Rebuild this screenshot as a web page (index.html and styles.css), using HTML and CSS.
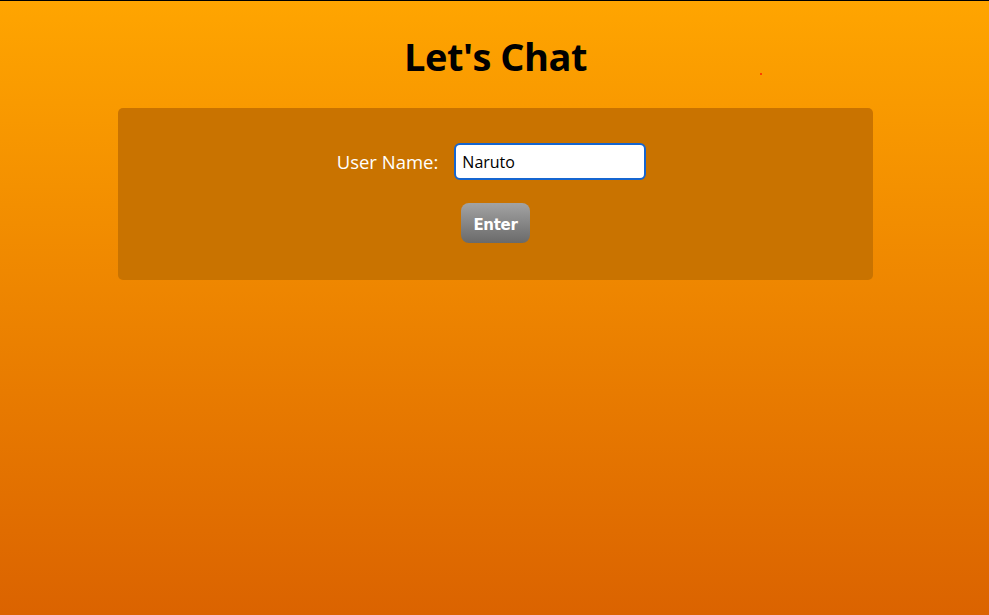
FILE: index.html
```html
<!DOCTYPE html>
<html>
<head>
<meta charset="utf-8">
<link rel="stylesheet" href="styles.css">
</head>
<body>
<div class="page">
  <h1 class="title">Let's Chat</h1>
  <span class="dot"></span>
  <div class="panel">
    <form class="login">
      <div class="row">
        <label class="label" for="user">User Name:</label>
        <input class="field" id="user" type="text" value="Naruto">
      </div>
      <button class="enter" type="button">Enter</button>
    </form>
  </div>
</div>
</body>
</html>
```
FILE: styles.css
```css
html, body {
  margin: 0;
  padding: 0;
  height: 100%;
}
body {
  border-top: 1px solid #000;
  box-sizing: border-box;
  background: linear-gradient(to bottom, #ffa500 0%, #db6300 100%);
  font-family: "Open Sans", "Noto Sans", sans-serif;
}
.page {
  position: relative;
  display: flex;
  flex-direction: column;
  align-items: center;
  padding-top: 31px;
}
.title {
  margin: 0;
  font-size: 38px;
  line-height: 48px;
  font-weight: 700;
  color: #000;
  letter-spacing: -0.5px;
  margin-left: 2px;
}
.dot {
  position: absolute;
  left: 760px;
  top: 72px;
  width: 2px;
  height: 2px;
  border-radius: 1px;
  background: #ff2000;
}
.panel {
  margin-top: 28px;
  width: 755px;
  height: 172px;
  box-sizing: border-box;
  background: #c97300;
  border-radius: 5px;
  margin-left: 2px;
  padding-top: 35px;
}
.login {
  display: flex;
  flex-direction: column;
  align-items: center;
  gap: 23px;
}
.row {
  display: flex;
  align-items: center;
  gap: 16px;
  margin-left: -8px;
}
.label {
  color: #fff;
  font-size: 18.5px;
  font-family: "Open Sans", "Noto Sans", sans-serif;
}
.field {
  width: 192px;
  height: 37px;
  box-sizing: border-box;
  border: 2px solid #1565d0;
  border-radius: 6px;
  padding: 0 6px;
  font-size: 16px;
  font-family: "Open Sans", "Noto Sans", sans-serif;
  color: #000;
  background: #fff;
  outline: none;
}
.enter {
  width: 69px;
  height: 40px;
  border: none;
  border-radius: 8px;
  background: linear-gradient(to bottom, #a3a3a3 0%, #6a6a6a 100%);
  color: #fff;
  font-family: "DejaVu Sans", Verdana, sans-serif;
  font-weight: 700;
  font-size: 15px;
  padding: 3px 0 0;
  letter-spacing: -0.3px;
}
```
